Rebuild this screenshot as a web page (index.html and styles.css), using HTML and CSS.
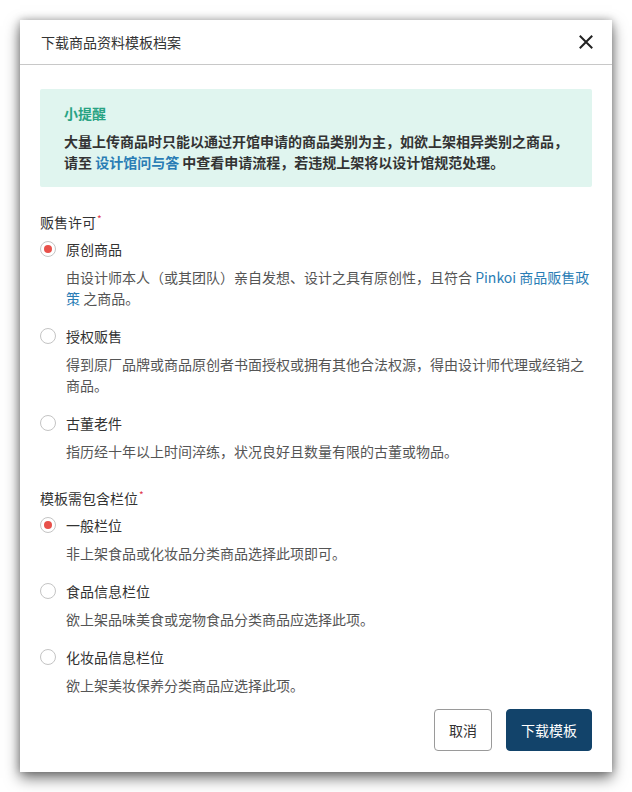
FILE: index.html
```html
<!DOCTYPE html>
<html lang="zh-CN">
<head>
<meta charset="utf-8">
<title>下载商品资料模板档案</title>
<link rel="stylesheet" href="styles.css">
</head>
<body>
<div class="modal">
  <div class="modal-header">
    <div class="modal-title">下载商品资料模板档案</div>
    <button class="close" aria-label="关闭">
      <svg width="14" height="14" viewBox="0 0 14 14"><path d="M1.5 1.5 L12.5 12.5 M12.5 1.5 L1.5 12.5" stroke="#222" stroke-width="2" stroke-linecap="square" fill="none"/></svg>
    </button>
  </div>
  <div class="modal-body">
    <div class="alert">
      <div class="alert-title">小提醒</div>
      <div class="alert-text">大量上传商品时只能以通过开馆申请的商品类别为主，如欲上架相异类别之商品，<br>请至 <a class="link" href="#">设计馆问与答</a> 中查看申请流程，若违规上架将以设计馆规范处理。</div>
    </div>

    <div class="group">
      <div class="group-label">贩售许可<span class="req">*</span></div>
      <div class="options">
        <div class="option">
          <div class="option-row"><span class="radio checked"></span><span class="option-label">原创商品</span></div>
          <div class="option-desc">由设计师本人（或其团队）亲自发想、设计之具有原创性，且符合 <a class="link" href="#">Pinkoi 商品贩售政策</a> 之商品。</div>
        </div>
        <div class="option">
          <div class="option-row"><span class="radio"></span><span class="option-label">授权贩售</span></div>
          <div class="option-desc">得到原厂品牌或商品原创者书面授权或拥有其他合法权源，得由设计师代理或经销之商品。</div>
        </div>
        <div class="option">
          <div class="option-row"><span class="radio"></span><span class="option-label">古董老件</span></div>
          <div class="option-desc">指历经十年以上时间淬练，状况良好且数量有限的古董或物品。</div>
        </div>
      </div>
    </div>

    <div class="group">
      <div class="group-label">模板需包含栏位<span class="req">*</span></div>
      <div class="options">
        <div class="option">
          <div class="option-row"><span class="radio checked"></span><span class="option-label">一般栏位</span></div>
          <div class="option-desc">非上架食品或化妆品分类商品选择此项即可。</div>
        </div>
        <div class="option">
          <div class="option-row"><span class="radio"></span><span class="option-label">食品信息栏位</span></div>
          <div class="option-desc">欲上架品味美食或宠物食品分类商品应选择此项。</div>
        </div>
        <div class="option">
          <div class="option-row"><span class="radio"></span><span class="option-label">化妆品信息栏位</span></div>
          <div class="option-desc">欲上架美妆保养分类商品应选择此项。</div>
        </div>
      </div>
    </div>
  </div>
  <div class="modal-footer">
    <button class="btn btn-default">取消</button>
    <button class="btn btn-primary">下载模板</button>
  </div>
</div>
</body>
</html>
```
FILE: styles.css
```css
* { box-sizing: border-box; }
html, body { margin: 0; padding: 0; background: #ffffff; }
body {
  font-family: "Noto Sans CJK SC", "Noto Sans", "Liberation Sans", sans-serif;
  font-size: 14px;
  color: #333;
}
.modal {
  margin: 20px;
  width: 592px;
  height: 752px;
  background: #fff;
  box-shadow: 0 6px 14px rgba(0, 0, 0, 0.55), 0 0 8px rgba(0, 0, 0, 0.25);
  display: flex;
  flex-direction: column;
  overflow: hidden;
}
.modal-header {
  height: 45px;
  border-bottom: 1px solid #c8c8c8;
  display: flex;
  align-items: center;
  justify-content: space-between;
  padding: 0 19px 0 21px;
  flex: none;
}
.modal-title {
  font-size: 14px;
  line-height: 20px;
  color: #333;
}
.close {
  border: 0;
  background: none;
  padding: 0;
  width: 14px;
  height: 14px;
  display: flex;
  cursor: pointer;
}
.modal-body {
  flex: 1;
  padding: 24px 20px 0;
  overflow: hidden;
}
.alert {
  background: #e0f5ef;
  border-radius: 2px;
  padding: 14px 24px 14px;
}
.alert-title {
  color: #28a383;
  font-weight: 700;
  line-height: 20px;
  margin-bottom: 8px;
}
.alert-text {
  font-weight: 700;
  line-height: 21px;
  color: #333;
}
.link {
  color: #2a7db5;
  text-decoration: none;
}
.group { margin-top: 24px; }
.group + .group { margin-top: 25px; }
.group-label {
  line-height: 22px;
  color: #333;
}
.req {
  color: #e0364b;
  font-size: 10px;
  vertical-align: top;
  line-height: 16px;
  margin-left: 1px;
}
.options {
  margin-top: 5px;
  display: flex;
  flex-direction: column;
  gap: 16px;
}
.option-row {
  display: flex;
  align-items: center;
  height: 22px;
}
.radio {
  width: 16px;
  height: 16px;
  border: 1px solid #c4c4c4;
  border-radius: 50%;
  display: flex;
  align-items: center;
  justify-content: center;
  margin-right: 10px;
  flex: none;
}
.radio.checked::after {
  content: "";
  width: 8px;
  height: 8px;
  border-radius: 50%;
  background: #e8504a;
}
.option-label {
  color: #333;
  line-height: 22px;
}
.option-desc {
  margin-top: 7px;
  padding-left: 26px;
  line-height: 21px;
  color: #555;
}
.modal-footer {
  flex: none;
  display: flex;
  justify-content: flex-end;
  gap: 14px;
  padding: 0 20px 21px;
}
.btn {
  height: 42px;
  border-radius: 4px;
  font-family: inherit;
  font-size: 14px;
  padding: 0;
  cursor: pointer;
}
.btn-default {
  width: 58px;
  background: #fff;
  border: 1px solid #9a9a9a;
  color: #333;
}
.btn-primary {
  width: 86px;
  background: #12436a;
  border: 1px solid #12436a;
  color: #fff;
}
```
